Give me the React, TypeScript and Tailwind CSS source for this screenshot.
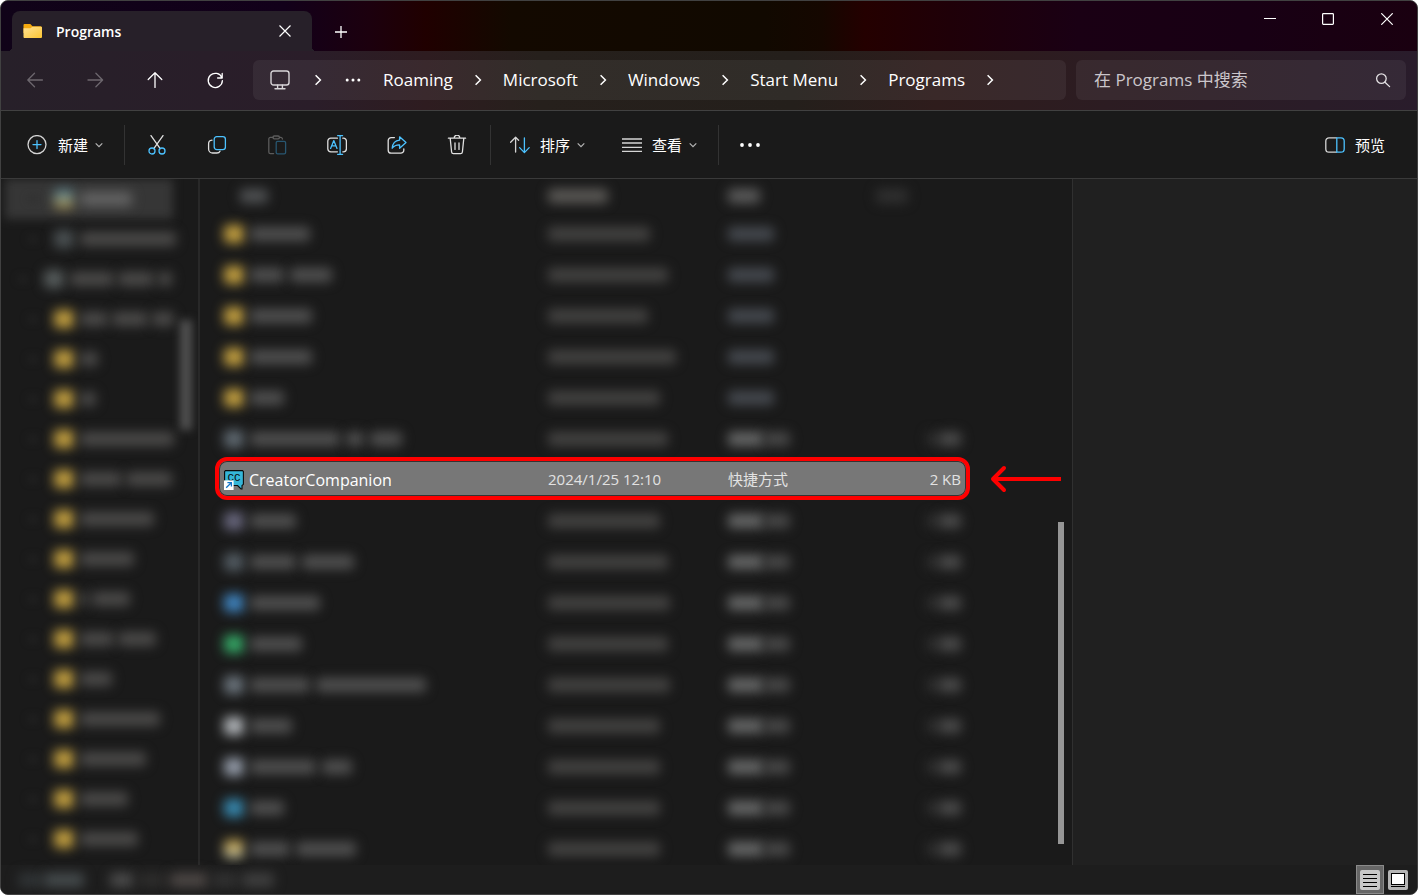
import { useState } from 'react';
import type { ReactNode } from 'react';

type HiddenRow = { icon: string; name: number[]; date: number; shortcut: boolean };

const crumbs = ['Roaming', 'Microsoft', 'Windows', 'Start Menu', 'Programs'];

// Widths of the blurred labels, one number per word
const sidebarItems = [
  { depth: 1, icon: 'bg-linear-to-b from-[#4f86a0] to-[#b3933f]', words: [52] },
  { depth: 1, icon: 'bg-[#4a5052]', words: [96] },
  { depth: 0, icon: 'bg-[#565c5c]', words: [44, 36, 14] },
  { depth: 1, icon: 'bg-[#c29f40]', words: [28, 36, 22] },
  { depth: 1, icon: 'bg-[#c29f40]', words: [18] },
  { depth: 1, icon: 'bg-[#c29f40]', words: [16] },
  { depth: 1, icon: 'bg-[#c29f40]', words: [94] },
  { depth: 1, icon: 'bg-[#c29f40]', words: [42, 46] },
  { depth: 1, icon: 'bg-[#c29f40]', words: [74] },
  { depth: 1, icon: 'bg-[#c29f40]', words: [54] },
  { depth: 1, icon: 'bg-[#c29f40]', words: [8, 38] },
  { depth: 1, icon: 'bg-[#c29f40]', words: [34, 38] },
  { depth: 1, icon: 'bg-[#c29f40]', words: [32] },
  { depth: 1, icon: 'bg-[#c29f40]', words: [80] },
  { depth: 1, icon: 'bg-[#c29f40]', words: [66] },
  { depth: 1, icon: 'bg-[#c29f40]', words: [48] },
  { depth: 1, icon: 'bg-[#c29f40]', words: [58] },
];

const rowsBefore: HiddenRow[] = [
  { icon: 'bg-[#c29f40]', name: [60], date: 102, shortcut: false },
  { icon: 'bg-[#c29f40]', name: [34, 42], date: 120, shortcut: false },
  { icon: 'bg-[#c29f40]', name: [62], date: 100, shortcut: false },
  { icon: 'bg-[#c29f40]', name: [62], date: 128, shortcut: false },
  { icon: 'bg-[#c29f40]', name: [34], date: 112, shortcut: false },
  { icon: 'bg-[#5e6870]', name: [90, 18, 32], date: 120, shortcut: true },
];

const rowsAfter: HiddenRow[] = [
  { icon: 'bg-[#67667c]', name: [46], date: 112, shortcut: true },
  { icon: 'bg-[#525b62]', name: [46, 52], date: 120, shortcut: true },
  { icon: 'bg-[#3f83bd]', name: [70], date: 122, shortcut: true },
  { icon: 'bg-[#35a565]', name: [52], date: 120, shortcut: true },
  { icon: 'bg-[#6a737b]', name: [60, 110], date: 122, shortcut: true },
  { icon: 'bg-[#b0b4b8]', name: [42], date: 112, shortcut: true },
  { icon: 'bg-[#939ba8]', name: [66, 30], date: 112, shortcut: true },
  { icon: 'bg-[#3787ad]', name: [34], date: 112, shortcut: true },
  { icon: 'bg-linear-to-b from-[#c9a23c] to-[#b5b8a0]', name: [40, 60], date: 112, shortcut: true },
];

function Blur({ width, className = 'bg-[#515151]' }: { width: number; className?: string }) {
  return <span className={`block h-3.5 shrink-0 rounded-sm blur-[6px] ${className}`} style={{ width }} />;
}

function Icon({ children, className = '' }: { children: ReactNode; className?: string }) {
  return (
    <svg className={`h-5 w-5 shrink-0 ${className}`} viewBox="0 0 20 20" fill="none" stroke="currentColor" strokeWidth="1.3" strokeLinecap="round" strokeLinejoin="round">
      {children}
    </svg>
  );
}

function ChevronDown() {
  return (
    <svg className="h-2 w-2 shrink-0 text-[#b5b5b5]" viewBox="0 0 8 8" fill="none" stroke="currentColor" strokeWidth="1.2">
      <path d="M0.7 2.4 4 5.6 7.3 2.4" />
    </svg>
  );
}

function ChevronRight() {
  return (
    <span className="flex w-[50px] shrink-0 justify-center">
      <svg className="h-3 w-3" viewBox="0 0 12 12" fill="none" stroke="currentColor" strokeWidth="1.5">
        <path d="M3.6 1.2 8.4 6 3.6 10.8" />
      </svg>
    </span>
  );
}

function FolderIcon() {
  return (
    <svg className="h-5 w-5 shrink-0" viewBox="0 0 20 20">
      <defs>
        <linearGradient id="folder" x1="0" y1="0" x2="1" y2="1">
          <stop offset="0" stopColor="#ffe294" />
          <stop offset="1" stopColor="#fdc532" />
        </linearGradient>
      </defs>
      <path d="M1.5 3h5.8l2.2 2.2h8a1.5 1.5 0 0 1 1.5 1.5V12H0.5V4a1 1 0 0 1 1-1Z" fill="#f5a90e" />
      <path d="M0.5 7.2h7L9.4 5.8H18a1 1 0 0 1 1 1V16a1 1 0 0 1-1 1H1.5a1 1 0 0 1-1-1Z" fill="url(#folder)" />
    </svg>
  );
}

function CreatorCompanionIcon() {
  return (
    <svg className="h-5 w-5 shrink-0" viewBox="0 0 20 20">
      <path d="M1.5 0.6h17l0.9 0.9v12.8l-1.4 1.2V19h-1l-3.4-3.5H0.6V1.5Z" fill="#35b6d8" stroke="#0b0b0b" strokeWidth="1.1" />
      <text x="3.4" y="11" fontFamily="Liberation Mono, monospace" fontSize="11" fill="#0b0b0b">CC</text>
      <rect x="0" y="10.4" width="9.6" height="9.6" fill="#fff" />
      <path d="M2.2 17.8 7 13M3.4 12.6h4v4" fill="none" stroke="#1173c9" strokeWidth="1.3" />
    </svg>
  );
}

function IconButton({ label, disabled, children }: { label: string; disabled?: boolean; children: ReactNode }) {
  return (
    <button aria-label={label} disabled={disabled} className="flex h-10 w-[60px] shrink-0 items-center justify-center">
      {children}
    </button>
  );
}

function HiddenFile({ row }: { row: HiddenRow }) {
  return (
    <tr className="h-[41px]">
      <td>
        <div className="flex items-center gap-1.5 pl-2">
          <span className={`h-[18px] w-5 shrink-0 rounded blur-[6px] ${row.icon}`} />
          {row.name.map((w, i) => <Blur key={i} width={w} />)}
        </div>
      </td>
      <td><Blur width={row.date} className="bg-[#444342]" /></td>
      <td>
        {row.shortcut ? (
          <div className="flex">
            <Blur width={36} className="bg-[#676868]" />
            <Blur width={26} className="bg-[#494949]" />
          </div>
        ) : (
          <Blur width={46} className="bg-[#464a50]" />
        )}
      </td>
      <td className="pr-2">
        {row.shortcut && (
          <div className="flex justify-end">
            <Blur width={12} className="bg-[#303030]" />
            <Blur width={22} className="bg-[#4c4c4c]" />
          </div>
        )}
      </td>
    </tr>
  );
}

export default function App() {
  const [query, setQuery] = useState('');
  const [view, setView] = useState('details');

  return (
    <div className="h-screen bg-white font-['Open_Sans','Noto_Sans_CJK_SC',sans-serif] text-white">
      <div className="flex h-full flex-col overflow-hidden rounded-lg border border-[#414141] bg-[#1a1a1a]">
        <div className="bg-[linear-gradient(90deg,#100318_0%,#12001a_20%,#1c000e_26%,#200000_30%,#130900_36%,#110900_54%,#150700_58%,#240000_61%,#1f0008_67%,#1a0014_76%,#180014_88%,#1a0010_100%)]">
          {/* Tab strip */}
          <div className="flex h-[50px] items-start">
            <div className="relative ml-[11px] mt-2.5 flex h-10 w-[300px] items-center rounded-t-lg bg-[#272029] pl-[11px] pr-[17px]">
              <FolderIcon />
              <span className="ml-[13px] flex-1 pt-px text-sm font-semibold">Programs</span>
              <button aria-label="关闭标签页" className="flex h-5 w-5 items-center justify-center">
                <svg className="h-3 w-3" viewBox="0 0 12 12" stroke="currentColor" strokeWidth="1.2"><path d="M0.5 0.5 11.5 11.5M11.5 0.5 0.5 11.5" /></svg>
              </button>
              <span className="absolute -left-1 bottom-0 h-1 w-1 bg-[radial-gradient(circle_at_0_0,transparent_4px,#272029_4px)]" />
              <span className="absolute -right-1 bottom-0 h-1 w-1 bg-[radial-gradient(circle_at_100%_0,transparent_4px,#272029_4px)]" />
            </div>
            <button aria-label="新标签页" className="ml-[11px] mt-[11px] flex h-10 w-9 items-center justify-center">
              <svg className="h-3 w-3" viewBox="0 0 12 12" stroke="currentColor" strokeWidth="1.3"><path d="M6 0v12M0 6h12" /></svg>
            </button>
            <div className="ml-auto flex h-9">
              <button aria-label="最小化" className="flex w-[58px] items-center justify-center">
                <svg className="h-3 w-3" viewBox="0 0 12 12" stroke="currentColor"><path d="M0 5.5h12" /></svg>
              </button>
              <button aria-label="最大化" className="flex w-[58px] items-center justify-center">
                <svg className="h-3 w-3" viewBox="0 0 12 12" fill="none" stroke="currentColor" strokeWidth="1.2"><rect x="0.6" y="0.6" width="10.8" height="10.8" rx="0.8" /></svg>
              </button>
              <button aria-label="关闭" className="flex w-[60px] items-center justify-center">
                <svg className="h-3 w-3" viewBox="0 0 12 12" stroke="currentColor" strokeWidth="1.2"><path d="M0.3 0.3 11.7 11.7M11.7 0.3 0.3 11.7" /></svg>
              </button>
            </div>
          </div>

          {/* Navigation row */}
          <div className="flex h-[60px] items-center border-b border-[#414141] bg-[linear-gradient(90deg,#272029_0%,#2a1d29_22%,#2e1c20_30%,#26201c_38%,#241f1b_56%,#2e1c1c_66%,#2c1c22_78%,#291c2b_100%)] pb-px pl-1 pr-[11px]">
            <IconButton label="后退" disabled>
              <Icon className="text-[#6d676e]"><path d="M3 10h14.4M9.5 3.2 2.8 10l6.7 6.8" /></Icon>
            </IconButton>
            <IconButton label="前进" disabled>
              <Icon className="text-[#6d676e]"><path d="M3 10h14.4M10.9 3.2 17.6 10l-6.7 6.8" /></Icon>
            </IconButton>
            <IconButton label="向上">
              <Icon><path d="M10 17.4V3M3.2 9.5 10 2.8l6.8 6.7" /></Icon>
            </IconButton>
            <IconButton label="刷新">
              <Icon><path d="M16.9 7.8A7.1 7.1 0 1 0 17.4 10.6M17.2 3.4v4.6h-4.6" /></Icon>
            </IconButton>
            <nav aria-label="地址栏" className="ml-2 flex h-10 flex-1 items-center rounded-md bg-white/6 pl-[17px] text-[17px]">
              <svg className="h-5 w-5 shrink-0 text-[#d8d5d8]" viewBox="0 0 20 20" fill="none" stroke="currentColor" strokeWidth="1.4" strokeLinecap="round">
                <rect x="1" y="1" width="18" height="14" rx="2.5" />
                <path d="M7.6 15.2v3M12.4 15.2v3M5 18.8h10" />
              </svg>
              <span className="ml-[3px] flex"><ChevronRight /></span>
              <button aria-label="更多位置" className="mr-5 flex w-5 justify-center">
                <svg className="h-1 w-4" viewBox="0 0 16 4" fill="currentColor"><circle cx="2.2" cy="2" r="1.5" /><circle cx="8" cy="2" r="1.5" /><circle cx="13.8" cy="2" r="1.5" /></svg>
              </button>
              {crumbs.map(name => (
                <span key={name} className="flex items-center">
                  <a href="#" className="whitespace-nowrap">{name}</a>
                  <ChevronRight />
                </span>
              ))}
            </nav>
            <label className="ml-2.5 flex h-10 w-[330px] items-center rounded-md bg-white/6 pl-[18px] pr-[15px]">
              <input
                aria-label="搜索"
                value={query}
                onChange={e => setQuery(e.target.value)}
                placeholder="在 Programs 中搜索"
                className="min-w-0 flex-1 bg-transparent text-[17px] outline-none placeholder:text-[#cbc6cb]"
              />
              <svg className="h-4 w-4 text-[#e2dfe2]" viewBox="0 0 16 16" fill="none" stroke="currentColor" strokeWidth="1.3" strokeLinecap="round"><circle cx="6.4" cy="6.6" r="4.8" /><path d="M10 10.2 14.6 14.6" /></svg>
            </label>
          </div>
        </div>

        {/* Command bar */}
        <div className="flex h-[68px] shrink-0 items-center border-b border-[#3a3a3a] text-[15px] text-[#e0e0e0]">
          <button className="ml-[26px] flex items-center text-white">
            <Icon className="text-[#d5d5d5]">
              <circle cx="10" cy="9.6" r="9" />
              <path d="M10 5.6v8M6 9.6h8" stroke="#4cc2ff" />
            </Icon>
            <span className="ml-[11px] mr-[7px] pt-px">新建</span>
            <ChevronDown />
          </button>
          <div className="ml-[21px] mr-0.5 h-10 w-px bg-[#333]" />
          <IconButton label="剪切">
            <Icon>
              <path d="M4 0.6 13.2 13.6M16 0.6 6.8 13.6" />
              <circle cx="5" cy="16" r="3" stroke="#4cc2ff" />
              <circle cx="15" cy="16" r="3" stroke="#4cc2ff" />
            </Icon>
          </IconButton>
          <IconButton label="复制">
            <Icon>
              <path d="M5 5.2C3 5.4 1.6 6.4 1.6 8.6V14a4 4 0 0 0 4 4h4.2c1.8 0 2.7-.6 3.2-1.8" />
              <rect x="7.2" y="1.6" width="11.2" height="13" rx="2.6" stroke="#4cc2ff" />
            </Icon>
          </IconButton>
          <IconButton label="粘贴" disabled>
            <Icon className="text-[#5c5c5c]">
              <path d="M6 2.4H3.4A1.6 1.6 0 0 0 1.8 4v13a1.6 1.6 0 0 0 1.6 1.6h3.2M12.6 2.4h1.2A1.6 1.6 0 0 1 15.4 4" />
              <rect x="6" y="1" width="6.4" height="2.8" rx="1.3" />
              <rect x="9.2" y="6.4" width="9.4" height="12.4" rx="1.4" stroke="#285670" />
            </Icon>
          </IconButton>
          <IconButton label="重命名">
            <Icon>
              <path d="M10.4 3.2H3.8A3 3 0 0 0 0.8 6.2v7.6a3 3 0 0 0 3 3h6.6M15.8 3.2h.6a3 3 0 0 1 3 3v7.6a3 3 0 0 1-3 3h-.6" />
              <path d="M3.6 13.4 6.8 5.6 10 13.4M4.7 10.8h4.2M13.1 0.8v18.4M10.6 0.7h5M10.6 19.3h5" stroke="#4cc2ff" />
            </Icon>
          </IconButton>
          <IconButton label="共享">
            <Icon>
              <path d="M7.4 2.6H4.2a3 3 0 0 0-3 3v9.6a3 3 0 0 0 3 3h9.6a3 3 0 0 0 3-3v-1.4" />
              <path d="M12.6 1.8 19 7.6l-6.4 5.6V9.8c-3.4-.2-5.4.8-7.4 3.4.4-4.6 2.8-7.6 7.4-8Z" stroke="#4cc2ff" />
            </Icon>
          </IconButton>
          <IconButton label="删除">
            <Icon>
              <path d="M1.4 3.2h17.2M7.2 3A2.8 2.8 0 0 1 12.8 3M3.2 3.4 4.6 17a1.8 1.8 0 0 0 1.8 1.6h7.2a1.8 1.8 0 0 0 1.8-1.6L16.8 3.4M8 8v6.4M12 8v6.4" />
            </Icon>
          </IconButton>
          <div className="ml-[3px] h-10 w-px bg-[#333]" />
          <button className="ml-[19px] flex items-center text-white">
            <Icon className="text-[#d5d5d5]">
              <path d="M5.6 17V2.4M0.6 7.2 5.6 2.2 8.6 5.2" />
              <path d="M14.4 3v14.4M9.6 12.6l4.8 5 4.8-5" stroke="#4cc2ff" />
            </Icon>
            <span className="ml-2.5 mr-[7px] pt-px">排序</span>
            <ChevronDown />
          </button>
          <button className="ml-[37px] flex items-center text-white">
            <Icon className="text-[#d5d5d5]"><path d="M0 4h20M0 8h20M0 12.4h20M0 16.4h20" strokeLinecap="butt" /></Icon>
            <span className="ml-2.5 mr-[7px] pt-px">查看</span>
            <ChevronDown />
          </button>
          <div className="ml-[21px] h-10 w-px bg-[#333]" />
          <button aria-label="查看更多" className="ml-5 text-white">
            <svg className="h-5 w-[22px]" viewBox="0 0 22 20" fill="currentColor"><circle cx="3" cy="10" r="1.9" /><circle cx="11" cy="10" r="1.9" /><circle cx="19" cy="10" r="1.9" /></svg>
          </button>
          <button className="ml-auto mr-8 flex items-center gap-2.5 text-white">
            <Icon className="text-[#d5d5d5]">
              <path d="M11.4 2.8H4a3.2 3.2 0 0 0-3.2 3.2v8A3.2 3.2 0 0 0 4 17.2h7.4" />
              <path d="M11.8 2.8H16A3.2 3.2 0 0 1 19.2 6v8a3.2 3.2 0 0 1-3.2 3.2h-4.2Z" stroke="#4cc2ff" />
            </Icon>
            <span className="pt-px">预览</span>
          </button>
        </div>

        <div className="flex min-h-0 flex-1">
          {/* Navigation pane */}
          <aside className="relative w-[199px] shrink-0 overflow-hidden border-r-2 border-[#282828]">
            <ul>
              {sidebarItems.map((item, i) => (
                <li key={i} className="relative flex h-10 items-center">
                  {i === 0 && <span className="absolute inset-y-0 left-1 w-[168px] bg-[#363636] blur-[5px]" />}
                  <span className={`h-1 w-2 shrink-0 bg-[#2c2c2c] blur-[4px] ${item.depth ? 'ml-7 mr-[17px]' : 'ml-[18px] mr-[17px]'}`} />
                  <span className={`relative mr-1.5 h-[18px] w-5 shrink-0 rounded blur-[6px] ${item.icon}`} />
                  <span className="relative flex gap-1">
                    {item.words.map((w, j) => <Blur key={j} width={w} className={i === 0 ? 'bg-[#646464]' : 'bg-[#4c4b4a]'} />)}
                  </span>
                </li>
              ))}
            </ul>
            <span className="absolute right-1.5 top-[141px] h-[110px] w-3 bg-[#515151] blur-[4px]" />
          </aside>

          {/* File list */}
          <main className="flex min-w-0 flex-1 overflow-hidden">
            <div className="min-w-0 flex-1 pl-4">
              <table className="w-[753px] table-fixed text-left">
                <colgroup>
                  <col className="w-[332px]" />
                  <col className="w-[180px]" />
                  <col className="w-[140px]" />
                  <col />
                </colgroup>
                <thead>
                  <tr className="h-[34px]">
                    <th className="pl-6"><Blur width={28} className="bg-[#505254]" /></th>
                    <th><Blur width={60} className="bg-[#5c5a57]" /></th>
                    <th><Blur width={32} className="bg-[#5c5c5c]" /></th>
                    <th className="pl-2"><Blur width={32} className="bg-[#303030]" /></th>
                  </tr>
                </thead>
                <tbody>
                  {rowsBefore.map((row, i) => <HiddenFile key={i} row={row} />)}
                  <tr className="relative h-[41px] text-[15px] text-[#e2e2e2]">
                    <td>
                      <span className="absolute -inset-x-px -top-0.5 bottom-0 rounded-xl border-[4px] border-[#fe0000] bg-[#777] shadow-[inset_0_0_0_1px_#333]" />
                      <div className="relative flex items-center gap-[5px] pl-2 text-base text-white">
                        <CreatorCompanionIcon />
                        CreatorCompanion
                      </div>
                    </td>
                    <td><span className="relative">2024/1/25 12:10</span></td>
                    <td><span className="relative">快捷方式</span></td>
                    <td className="pr-2 text-right">
                      <span className="relative">2 KB</span>
                      <svg className="absolute left-full top-1.5 ml-5 h-7 w-[72px]" viewBox="0 0 72 28" fill="none" stroke="#fe0000" strokeWidth="4">
                        <path d="M4 14h68" />
                        <path d="M15 3 4 14l11 11" strokeLinecap="round" strokeLinejoin="round" />
                      </svg>
                    </td>
                  </tr>
                  {rowsAfter.map((row, i) => <HiddenFile key={i} row={row} />)}
                </tbody>
              </table>
            </div>
            <div className="mb-[21px] mr-2 flex w-1.5 shrink-0 flex-col justify-end">
              <div className="h-[322px] bg-[#969696]" />
            </div>
          </main>

          <section aria-label="预览窗格" className="w-[345px] shrink-0 border-l border-[#303030] bg-[#202020]" />
        </div>

        {/* Status bar */}
        <footer className="flex h-[29px] shrink-0 items-center bg-[#1d1d1d] pl-[17px] pr-[9px]">
          <Blur width={26} className="bg-[#303436]" />
          <Blur width={40} className="bg-[#464c4e]" />
          <span className="ml-[26px] flex gap-1">
            <Blur width={24} className="bg-[#4c4c4c]" />
            <Blur width={28} className="bg-[#2e2d2c]" />
            <Blur width={38} className="bg-[#4e4846]" />
            <Blur width={26} className="bg-[#323232]" />
            <Blur width={32} className="bg-[#404040]" />
          </span>
          <div className="ml-auto flex items-center gap-1">
            <button aria-label="详细信息" aria-pressed={view === 'details'} onClick={() => setView('details')} className="flex h-[29px] w-7 items-center justify-center border border-[#8a8a8a] bg-[#666]">
              <svg className="h-5 w-5" viewBox="0 0 20 20"><rect width="20" height="20" rx="2" fill="#c8c8c8" /><path d="M3 4.5h14M3 8.5h14M3 12.5h14M3 16.5h14" stroke="#000" strokeWidth="1" /></svg>
            </button>
            <button aria-label="大缩略图" aria-pressed={view === 'large'} onClick={() => setView('large')}>
              <svg className="h-5 w-5" viewBox="0 0 20 20"><rect width="20" height="20" rx="2" fill="#b5b5b5" /><rect x="3.5" y="3.5" width="13" height="11" fill="#fff" stroke="#000" /><path d="M3 16.5h14" stroke="#000" /></svg>
            </button>
          </div>
        </footer>
      </div>
    </div>
  );
}
